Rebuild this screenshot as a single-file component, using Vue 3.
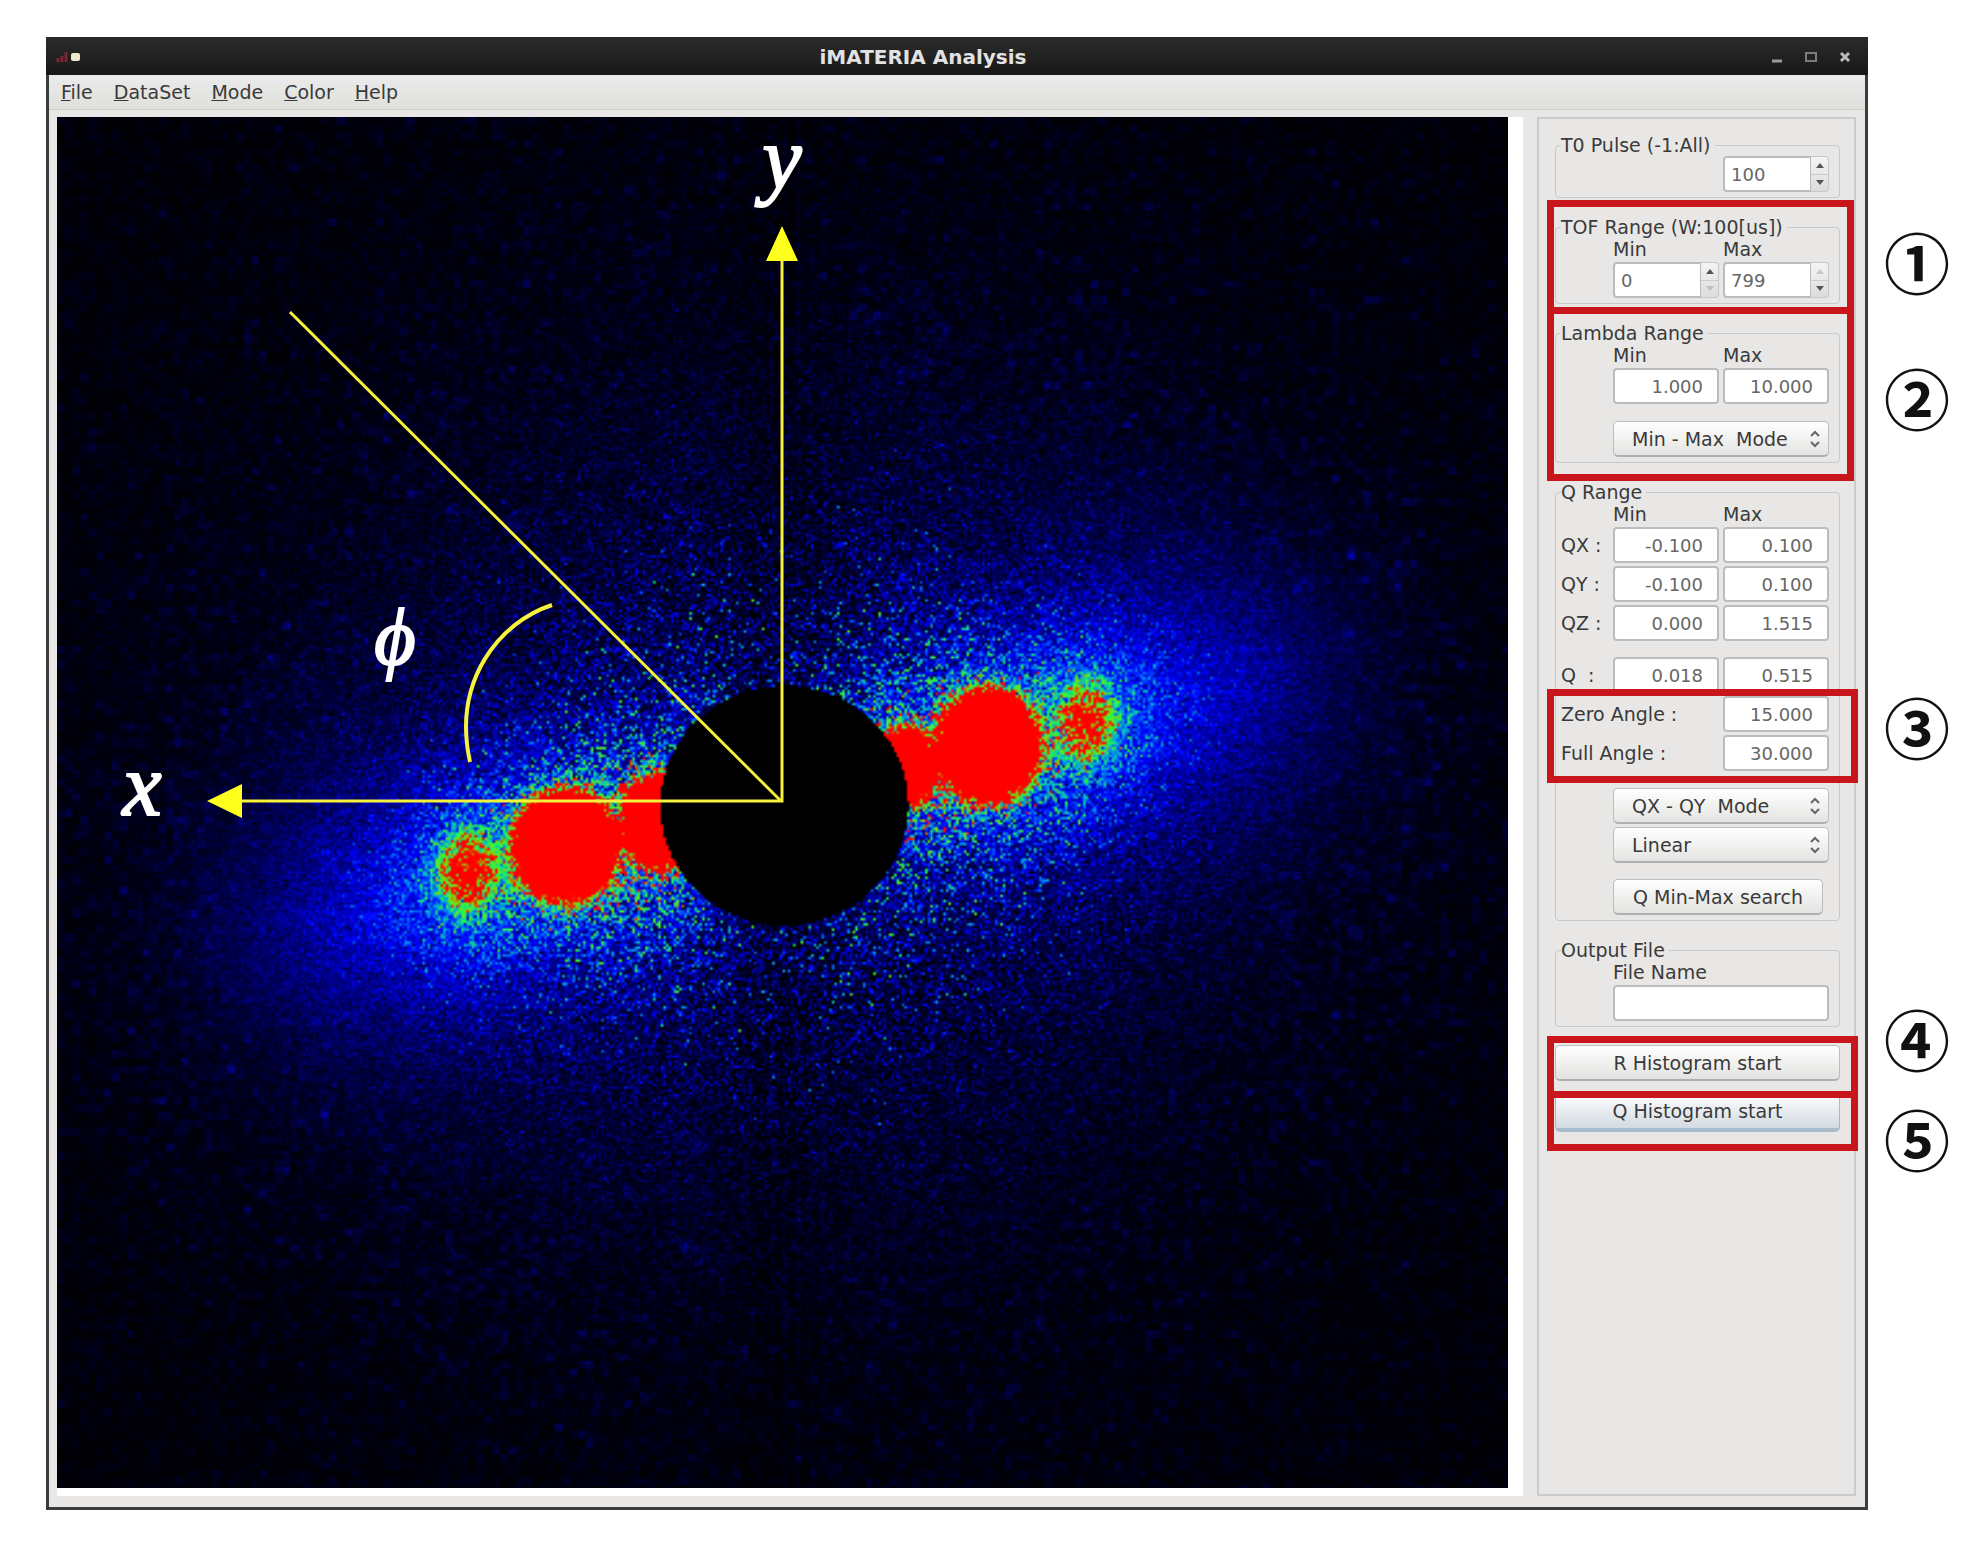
<script setup>
import { onMounted, ref } from 'vue'

const menus = [
  ['F', 'ile'],
  ['D', 'ataSet'],
  ['M', 'ode'],
  ['C', 'olor'],
  ['H', 'elp'],
]

const t0Pulse = ref('100')
const tofMin = ref('0')
const tofMax = ref('799')
const lambdaMin = ref('1.000')
const lambdaMax = ref('10.000')
const qRows = ref([
  { label: 'QX :', id: 'qx', min: '-0.100', max: '0.100' },
  { label: 'QY :', id: 'qy', min: '-0.100', max: '0.100' },
  { label: 'QZ :', id: 'qz', min: '0.000', max: '1.515' },
  { label: 'Q  :', id: 'q', min: '0.018', max: '0.515', apart: true },
])
const zeroAngle = ref('15.000')
const fullAngle = ref('30.000')
const fileName = ref('')

const detector = ref(null)
const COLS = 560
const ROWS = 529
const PLOT_WIDTH = 1451

// Deterministic generator, so that the map is the same on each load
function makeRandom(seed) {
  let s = seed
  return () => {
    s = (s + 0x6d2b79f5) | 0
    let t = Math.imul(s ^ (s >>> 15), 1 | s)
    t = (t + Math.imul(t ^ (t >>> 7), 61 | t)) ^ t
    return ((t ^ (t >>> 14)) >>> 0) / 4294967296
  }
}
const random = makeRandom(20171)

function normal() {
  return Math.sqrt(-2 * Math.log(random() + 1e-12)) * Math.cos(2 * Math.PI * random())
}

function gamma(shape) {
  if (shape < 1) return gamma(shape + 1) * Math.pow(random(), 1 / shape)
  const d = shape - 1 / 3
  const c = 1 / Math.sqrt(9 * d)
  for (;;) {
    const x = normal()
    const v = Math.pow(1 + c * x, 3)
    if (v > 0 && Math.log(random() + 1e-12) < 0.5 * x * x + d - d * v + d * Math.log(v)) return d * v
  }
}

// Scattering spots: centre, half axes and peak level
const spots = [
  { x: 508, y: 727, rx: 51, ry: 54, level: 6 },
  { x: 409, y: 753, rx: 34, ry: 46, level: 0.68 },
  { x: 600, y: 703, rx: 36, ry: 47, level: 5 },
  { x: 929, y: 628, rx: 49, ry: 55, level: 6 },
  { x: 1028, y: 603, rx: 34, ry: 46, level: 0.6 },
  { x: 845, y: 648, rx: 34, ry: 38, level: 5 },
]
const stops = [
  [0, 0, 0, 0],
  [0.28, 0, 0, 255],
  [0.34, 0, 30, 255],
  [0.48, 0, 160, 235],
  [0.64, 30, 250, 80],
  [0.82, 130, 225, 0],
  [0.93, 255, 20, 0],
  [1, 255, 0, 0],
]

function colorOf(value) {
  const v = Math.min(1, Math.max(0, value))
  let i = 1
  while (v > stops[i][0]) i++
  const a = stops[i - 1]
  const b = stops[i]
  const f = (v - a[0]) / (b[0] - a[0])
  return [a[1] + (b[1] - a[1]) * f, a[2] + (b[2] - a[2]) * f, a[3] + (b[3] - a[3]) * f]
}

function intensity(x, y) {
  const dx = x - 724
  const dy = y - 686
  const u = dx * 0.966 - dy * 0.259
  const v = dx * 0.259 + dy * 0.966
  const r = Math.hypot(dx, dy)
  const spread = 85 + Math.abs(u) * 0.08
  let value = 0.34 * Math.exp(-Math.pow(Math.abs(u) / 490, 4) - Math.pow(Math.abs(v) / spread, 1.6))
  value += 0.105 * Math.exp(-Math.pow(Math.hypot(u / 1.3, v) / 300, 2))
  value += 0.03 * Math.exp(-Math.pow(r / 650, 2)) + 0.008
  for (const s of spots) {
    const q = Math.pow((x - s.x) / s.rx, 2) + Math.pow((y - s.y) / s.ry, 2)
    value += s.level * Math.exp(-Math.pow(q, 1.5) * 1.9) + 0.13 * Math.exp(-q / 2.8)
  }
  if (Math.abs(u) < 300 && Math.abs(dx) < 90) value *= 0.55 + Math.abs(dx) / 200
  return value
}

onMounted(() => {
  const ctx = detector.value.getContext('2d')
  const image = ctx.createImageData(COLS, ROWS)
  const step = PLOT_WIDTH / COLS
  const blockCols = Math.ceil(COLS / 3)
  const blocks = Array.from({ length: blockCols * Math.ceil(ROWS / 3) }, () => gamma(1.6) / 1.6)
  for (let j = 0; j < ROWS; j++) {
    for (let i = 0; i < COLS; i++) {
      const x = i * step
      const y = j * step
      const dx = x - 726
      const dy = y - 687
      const r = Math.hypot(dx, dy)
      let rgb = [0, 0, 0]
      if (Math.hypot(dx / 124, dy / 120) > 1) {
        let mean = intensity(x, y)
        const ceiling = mean < 0.35 ? 0.72 : 1
        if (Math.abs(dx - 12) < 34 && i % 5 < 2) mean += 0.03 * Math.exp(-Math.abs(dy) / 500)
        const block = blocks[Math.floor(j / 3) * blockCols + Math.floor(i / 3)]
        const blend = Math.min(0.85, Math.pow(r / 600, 2)) * Math.max(0.15, 1 - mean / 0.1)
        mean *= 1 - blend + blend * block
        const counts = 6.5 + 90 * Math.pow(r / 500, 4)
        rgb = colorOf(Math.min(ceiling, gamma(mean * counts) / counts))
      }
      const at = (j * COLS + i) * 4
      image.data[at] = rgb[0]
      image.data[at + 1] = rgb[1]
      image.data[at + 2] = rgb[2]
      image.data[at + 3] = 255
    }
  }
  ctx.putImageData(image, 0, 0)
})
</script>

<template>
  <main class="page">
    <section class="window">
      <header class="titlebar">
        <svg class="app-icon" width="28" height="14" viewBox="0 0 28 14" aria-hidden="true">
          <path d="M2 12V8M6 12V6M10 12V2" fill="none" stroke="#7c2630" stroke-width="3" />
          <rect x="15" y="3" width="9" height="8" rx="2" fill="#efe9cf" />
        </svg>
        <h1>iMATERIA Analysis</h1>
        <div class="controls">
          <button type="button" aria-label="Minimize">
            <svg width="14" height="14" viewBox="0 0 14 14"><path d="M2 11h10" stroke="#999" stroke-width="3" /></svg>
          </button>
          <button type="button" aria-label="Maximize">
            <svg width="14" height="14" viewBox="0 0 14 14"><path d="M2 3h10v8H2z" fill="none" stroke="#7c7c7c" stroke-width="2" /></svg>
          </button>
          <button type="button" aria-label="Close">
            <svg width="14" height="14" viewBox="0 0 14 14"><path d="M3 3l8 8M11 3L3 11" stroke="#bbb" stroke-width="3" /></svg>
          </button>
        </div>
      </header>

      <nav class="menubar">
        <button v-for="m in menus" :key="m[0]" type="button"><u>{{ m[0] }}</u>{{ m[1] }}</button>
      </nav>

      <div class="body">
        <div class="plot">
          <canvas ref="detector" :width="COLS" :height="ROWS"></canvas>
          <svg class="axes" viewBox="0 0 1451 1371">
            <g fill="none" stroke="#f6f23c" stroke-width="3">
              <path d="M725 140V684H180" />
              <path d="M233 195L724 684" />
              <path d="M495 488C443 505 395 563 413 645" stroke-width="4" />
            </g>
            <path d="M725 109l16 35h-32zM150 684l35-17v34z" fill="#ffff1e" />
            <g class="symbols">
              <text x="85" y="698">x</text>
              <text x="725" y="71">y</text>
              <text class="phi" x="338" y="547">ϕ</text>
            </g>
          </svg>
        </div>

        <form class="panel" @submit.prevent>
          <fieldset>
            <legend>T0 Pulse (-1:All)</legend>
            <div class="grid">
              <div class="spin last">
                <input v-model="t0Pulse" type="text" aria-label="T0 Pulse" />
                <span class="steps"><button type="button" aria-label="Up"></button><button type="button" class="down" aria-label="Down"></button></span>
              </div>
            </div>
          </fieldset>

          <fieldset>
            <legend>TOF Range (W:100[us])</legend>
            <div class="grid">
              <label class="head first" for="tof-min">Min</label>
              <label class="head" for="tof-max">Max</label>
              <div class="spin first">
                <input id="tof-min" v-model="tofMin" type="text" />
                <span class="steps"><button type="button" aria-label="Up"></button><button type="button" class="down" aria-label="Down" disabled></button></span>
              </div>
              <div class="spin">
                <input id="tof-max" v-model="tofMax" type="text" />
                <span class="steps"><button type="button" aria-label="Up" disabled></button><button type="button" class="down" aria-label="Down"></button></span>
              </div>
            </div>
          </fieldset>

          <fieldset>
            <legend>Lambda Range</legend>
            <div class="grid">
              <label class="head first" for="lambda-min">Min</label>
              <label class="head" for="lambda-max">Max</label>
              <input id="lambda-min" v-model="lambdaMin" class="number first" type="text" />
              <input id="lambda-max" v-model="lambdaMax" class="number" type="text" />
              <div class="select apart">
                <select aria-label="Lambda mode"><option>Min - Max&nbsp; Mode</option></select>
                <svg width="12" height="18" viewBox="0 0 12 18"><path d="M2 6l4-4 4 4M2 12l4 4 4-4" /></svg>
              </div>
            </div>
          </fieldset>

          <fieldset>
            <legend>Q Range</legend>
            <div class="grid">
              <span class="head first">Min</span>
              <span class="head">Max</span>
              <template v-for="row in qRows" :key="row.id">
                <label :for="row.id" :class="['name', { apart: row.apart }]">{{ row.label }}</label>
                <input :id="row.id" v-model="row.min" :class="['number', { apart: row.apart }]" type="text" />
                <input v-model="row.max" :class="['number', { apart: row.apart }]" type="text" :aria-label="row.id + ' max'" />
              </template>
              <label class="name wide" for="zero">Zero Angle :</label>
              <input id="zero" v-model="zeroAngle" class="number" type="text" />
              <label class="name wide" for="full">Full Angle :</label>
              <input id="full" v-model="fullAngle" class="number" type="text" />
              <div class="select apart">
                <select aria-label="Plane mode"><option>QX - QY&nbsp; Mode</option></select>
                <svg width="12" height="18" viewBox="0 0 12 18"><path d="M2 6l4-4 4 4M2 12l4 4 4-4" /></svg>
              </div>
              <div class="select">
                <select aria-label="Scale"><option>Linear</option></select>
                <svg width="12" height="18" viewBox="0 0 12 18"><path d="M2 6l4-4 4 4M2 12l4 4 4-4" /></svg>
              </div>
              <button type="button" class="push search apart">Q Min-Max search</button>
            </div>
          </fieldset>

          <fieldset>
            <legend>Output File</legend>
            <div class="grid">
              <label class="head across" for="file">File Name</label>
              <input id="file" v-model="fileName" class="across" type="text" />
            </div>
          </fieldset>

          <div class="actions">
            <button type="button" class="push">R Histogram start</button>
            <button type="button" class="push focused">Q Histogram start</button>
          </div>

          <div class="callout tof"></div>
          <div class="callout lambda"></div>
          <div class="callout angle"></div>
          <div class="callout r-start"></div>
          <div class="callout q-start"></div>
          <span class="marker m1">①</span>
          <span class="marker m2">②</span>
          <span class="marker m3">③</span>
          <span class="marker m4">④</span>
          <span class="marker m5">⑤</span>
        </form>
      </div>
    </section>
  </main>
</template>

<style>
body {
  margin: 0;
  background: #fff;
}
</style>

<style scoped>
* {
  box-sizing: border-box;
}
.page {
  padding: 37px 112px 47px 46px;
  font-family: "DejaVu Sans", sans-serif;
  font-size: 19px;
  line-height: 22px;
  color: #3a3a3a;
}
button,
input,
select {
  margin: 0;
  font: inherit;
  color: inherit;
}
.window {
  border: 3px solid #3c3c3e;
  border-top: 0;
  background: #e8e7e6;
}
.titlebar {
  display: flex;
  align-items: center;
  justify-content: space-between;
  height: 38px;
  margin: 0 -3px;
  padding: 2px 16px 0 10px;
  background: linear-gradient(#2a2a2a, #222 50%, #17171a);
}
.app-icon {
  flex: none;
  margin-right: 6px;
}
.titlebar h1 {
  margin: 0;
  font-size: 20px;
  font-weight: bold;
  color: #e2e2e2;
}
.controls {
  display: flex;
  flex: 0 0 96px;
  justify-content: flex-end;
  gap: 20px;
}
.controls button {
  display: flex;
  padding: 0;
  border: 0;
  background: none;
}
.menubar {
  display: flex;
  gap: 21px;
  height: 35px;
  padding: 6px 12px;
  border-bottom: 1px solid #cfcfcb;
  background: linear-gradient(#ebebed, #dfdfda);
}
.menubar button {
  padding: 0;
  border: 0;
  background: none;
}
.body {
  display: flex;
  gap: 14px;
  padding: 7px 9px 11px 8px;
}
.plot {
  position: relative;
  flex: 1;
  min-width: 0;
  padding: 0 15px 8px 0;
  background: #fff;
}
canvas {
  display: block;
  width: 100%;
  height: auto;
}
.axes {
  position: absolute;
  top: 0;
  left: 0;
  width: calc(100% - 15px);
}
.symbols {
  fill: #fff;
  stroke: #fff;
  stroke-width: 2px;
  text-anchor: middle;
  font-family: "Liberation Serif", serif;
  font-size: 88px;
  font-style: italic;
}
.phi {
  font-family: "Liberation Serif", "DejaVu Serif", serif;
  font-size: 80px;
}
.panel {
  position: relative;
  flex: 0 0 319px;
  padding: 15px 14px 0 16px;
  border: 2px solid #cbcbcb;
}
fieldset {
  min-width: 0;
  margin: 0 0 18px;
  padding: 0 10px 5px 5px;
  border: 1px solid #c8c8c8;
  border-radius: 4px;
}
legend {
  margin: 0;
  padding: 0 4px 0 0;
}
.grid {
  display: grid;
  grid-template-columns: 48px 1fr 1fr;
  gap: 3px 4px;
}
.head {
  height: 21px;
}
.first {
  grid-column: 2;
}
.last {
  grid-column: 3;
}
.across,
.select,
.search {
  grid-column: 2 / 4;
}
.wide {
  grid-column: 1 / 3;
}
.name {
  align-self: center;
  white-space: pre;
}
.apart {
  margin-top: 13px;
}
input {
  width: 100%;
  min-width: 0;
  height: 36px;
  padding: 0 6px;
  border: 2px solid #bcbcbc;
  border-radius: 4px;
  background: #fff;
  font-size: 18px;
  color: #666;
}
.number {
  padding-right: 14px;
  text-align: right;
}
.spin {
  display: flex;
}
.spin input {
  flex: 1;
  border-right-width: 1px;
  border-radius: 4px 0 0 4px;
}
.steps {
  display: flex;
  flex: 0 0 18px;
  flex-direction: column;
  border: 1px solid #c8c8c8;
  border-left: 0;
  border-radius: 0 4px 4px 0;
  background: linear-gradient(#f4f4f4, #dcdcdc);
}
.steps button {
  display: flex;
  flex: 1;
  align-items: center;
  justify-content: center;
  padding: 0;
  border: 0;
  background: none;
}
.steps button::before {
  content: "";
  border: 4px solid transparent;
  border-top: 0;
  border-bottom: 5px solid #555;
}
.steps .down {
  border-top: 1px solid #ccc;
}
.steps .down::before {
  border-top: 5px solid #555;
  border-bottom: 0;
}
.steps button:disabled::before {
  opacity: 0.25;
}
.select {
  position: relative;
}
.select.apart {
  margin-top: 14px;
}
.select select {
  display: block;
  width: 100%;
  height: 36px;
  padding: 0 28px 0 18px;
  border: 1px solid #bdbdbd;
  border-bottom: 2px solid #b0b0b0;
  border-radius: 5px;
  appearance: none;
  background: linear-gradient(#fff, #e4e4e2);
}
.select svg {
  position: absolute;
  top: 9px;
  right: 8px;
  fill: none;
  stroke: #666;
  stroke-width: 2px;
}
.push {
  height: 36px;
  padding: 0;
  border: 1px solid #bdbdbd;
  border-bottom: 2px solid #b0b0b0;
  border-radius: 5px;
  background: linear-gradient(#fff, #e2e2e0);
}
.search {
  margin-right: 6px;
}
.actions {
  display: flex;
  flex-direction: column;
  gap: 11px;
}
.focused {
  height: 40px;
  border-color: #a9b9c6;
  border-bottom: 4px solid #a9bccb;
  background: linear-gradient(#fff, #d3dae2);
}
.callout {
  position: absolute;
  left: 8px;
  width: 307px;
  border: 7px solid #c9161d;
  pointer-events: none;
}
.marker {
  position: absolute;
  left: 345px;
  width: 66px;
  font-family: "Noto Sans CJK JP", sans-serif;
  font-size: 66px;
  font-weight: bold;
  line-height: 66px;
  text-align: center;
  color: #111;
}
.tof {
  top: 81px;
  height: 114px;
}
.lambda {
  top: 188px;
  height: 174px;
}
.angle {
  top: 570px;
  width: 311px;
  height: 94px;
}
.r-start {
  top: 917px;
  width: 311px;
  height: 62px;
}
.q-start {
  top: 972px;
  width: 311px;
  height: 60px;
}
.m1 {
  top: 108px;
}
.m2 {
  top: 244px;
}
.m3 {
  top: 573px;
}
.m4 {
  top: 885px;
}
.m5 {
  top: 985px;
}
</style>
